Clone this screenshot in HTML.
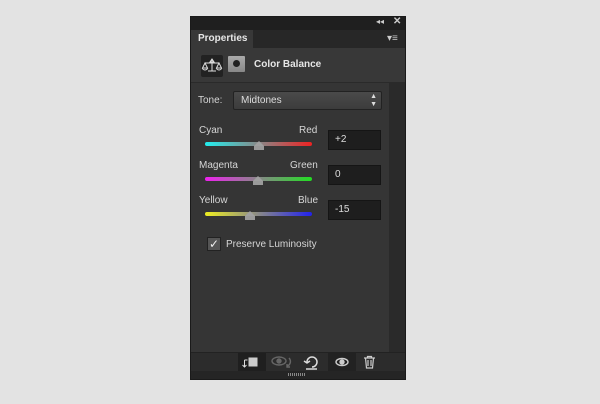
<!DOCTYPE html><html><head><style>
body{margin:0;width:600px;height:404px;background:#e3e3e3;position:relative;font-family:"Liberation Sans",sans-serif;font-size:10px;color:#d6d6d6;overflow:hidden}
.a{position:absolute}
.tr{height:4px;border-radius:2px;width:107px;left:205px}
.th{width:0;height:0;border-left:5px solid transparent;border-right:5px solid transparent;border-bottom:5px solid #a0a0a0}
.tb{width:10px;height:4px;background:#9a9a9a}
.in{left:328px;width:53px;background:#1e1e1e;border:1px solid #151515;color:#ddd;line-height:18px;text-indent:6px;box-sizing:border-box;height:20px}
</style></head><body>
<div class="a" style="left:190px;top:16px;width:216px;height:364px;background:#353535;border:1px solid #1a1a1a;box-sizing:border-box"></div>
<div class="a" style="left:191px;top:17px;width:214px;height:13px;background:#1f1f1f"></div>
<div class="a" style="left:376px;top:17px;color:#ccc;font-size:8px">◂◂</div>
<div class="a" style="left:393px;top:16px;color:#ccc;font-size:10px;font-weight:bold">✕</div>
<div class="a" style="left:191px;top:30px;width:214px;height:18px;background:#272727"></div>
<div class="a" style="left:191px;top:30px;width:62px;height:18px;background:#383838;color:#e6e6e6;font-weight:bold;line-height:18px;text-indent:7px">Properties</div>
<div class="a" style="left:387px;top:33px;color:#ccc;font-size:10px">▾≡</div>
<div class="a" style="left:191px;top:48px;width:214px;height:34px;background:#383838;border-bottom:1px solid #2a2a2a"></div>
<div class="a" style="left:201px;top:55px;width:22px;height:22px;background:#222;border-radius:2px"></div>
<svg class="a" style="left:201px;top:55px" width="22" height="22" viewBox="0 0 22 22" fill="none" stroke="#ddd" stroke-width="1"><path d="M11 4v12M7 16h8M4 8h14M11 4l-2 3h4z"/><path d="M4 8l-2.5 5h5zM18 8l-2.5 5h5z"/><path d="M1.5 13a2.5 2 0 0 0 5 0M15.5 13a2.5 2 0 0 0 5 0"/></svg>
<div class="a" style="left:228px;top:56px;width:17px;height:16px;background:linear-gradient(#aaa,#888);border-radius:1px"></div>
<div class="a" style="left:233px;top:60px;width:7px;height:7px;background:#222;border-radius:50%"></div>
<div class="a" style="left:254px;top:59px;color:#e6e6e6;font-weight:bold;font-size:10px">Color Balance</div>
<div class="a" style="left:389px;top:83px;width:16px;height:269px;background:#2a2a2a"></div>
<div class="a" style="left:198px;top:95px">Tone:</div>
<div class="a" style="left:233px;top:91px;width:149px;height:19px;background:linear-gradient(#4a4a4a,#3c3c3c);border:1px solid #222;border-radius:2px;box-sizing:border-box;line-height:17px;text-indent:7px;color:#ddd">Midtones<span style="position:absolute;right:4px;top:0;font-size:7px;line-height:8px;text-indent:0;padding-top:1px">▲<br>▼</span></div>
<div class="a" style="left:199px;top:125px">Cyan</div><div class="a" style="left:299px;top:125px">Red</div>
<div class="a tr" style="top:142px;background:linear-gradient(90deg,#2ee,#888,#e22)"></div>
<div class="a th" style="left:254px;top:141px"></div><div class="a tb" style="left:254px;top:146px"></div>
<div class="a in" style="top:130px">+2</div>
<div class="a" style="left:199px;top:160px">Magenta</div><div class="a" style="left:290px;top:160px">Green</div>
<div class="a tr" style="top:177px;background:linear-gradient(90deg,#e2e,#888,#2d2)"></div>
<div class="a th" style="left:253px;top:176px"></div><div class="a tb" style="left:253px;top:181px"></div>
<div class="a in" style="top:165px">0</div>
<div class="a" style="left:199px;top:195px">Yellow</div><div class="a" style="left:298px;top:195px">Blue</div>
<div class="a tr" style="top:212px;background:linear-gradient(90deg,#ee2,#888,#22e)"></div>
<div class="a th" style="left:245px;top:211px"></div><div class="a tb" style="left:245px;top:216px"></div>
<div class="a in" style="top:200px">-15</div>
<div class="a" style="left:207px;top:237px;width:14px;height:14px;background:#555;border:1px solid #222;box-sizing:border-box;color:#eee;font-size:12px;line-height:12px;text-align:center">✓</div>
<div class="a" style="left:226px;top:239px">Preserve Luminosity</div>
<div class="a" style="left:191px;top:352px;width:214px;height:19px;background:#2c2c2c;border-top:1px solid #222"></div>
<div class="a" style="left:238px;top:353px;width:28px;height:18px;background:#1f1f1f"></div>
<svg class="a" style="left:240px;top:355px" width="20" height="14" viewBox="0 0 20 14" fill="none" stroke="#ddd"><path d="M4.5 5v7M2.5 10l2 2 2-2M4.5 5h3"/><rect x="8.5" y="2.5" width="9" height="9" fill="#ccc" stroke="none"/></svg>
<svg class="a" style="left:270px;top:355px" width="26" height="14" viewBox="0 0 26 14" fill="none" stroke="#666" stroke-width="1.4"><ellipse cx="9" cy="6" rx="7" ry="4"/><circle cx="9" cy="6" r="2" fill="#666"/><path d="M19 3a5 5 0 0 1 0 7l-2 1M17 9v3h3"/></svg>
<svg class="a" style="left:303px;top:354px" width="16" height="16" viewBox="0 0 16 16" fill="none" stroke="#ddd" stroke-width="1.5"><path d="M4 8a5 5 0 1 1 5 5"/><path d="M1 7l3 2 3-2" /><path d="M3 15h11"/></svg>
<div class="a" style="left:328px;top:353px;width:28px;height:18px;background:#222"></div>
<svg class="a" style="left:334px;top:356px" width="16" height="12" viewBox="0 0 16 12" fill="none" stroke="#ccc" stroke-width="1.4"><ellipse cx="8" cy="6" rx="6" ry="3.5"/><circle cx="8" cy="6" r="2" fill="#ccc"/></svg>
<svg class="a" style="left:363px;top:355px" width="13" height="14" viewBox="0 0 13 14" fill="none" stroke="#ccc" stroke-width="1.2"><path d="M1 3h11M4.5 3V1.5h4V3M2.5 3l1 10h6l1-10M5 5v6M8 5v6"/></svg>
<div class="a" style="left:191px;top:371px;width:214px;height:8px;background:#252525"></div>
<div class="a" style="left:288px;top:373px;width:18px;height:3px;background:repeating-linear-gradient(90deg,#888 0 1px,transparent 1px 2px)"></div>
</body></html>
